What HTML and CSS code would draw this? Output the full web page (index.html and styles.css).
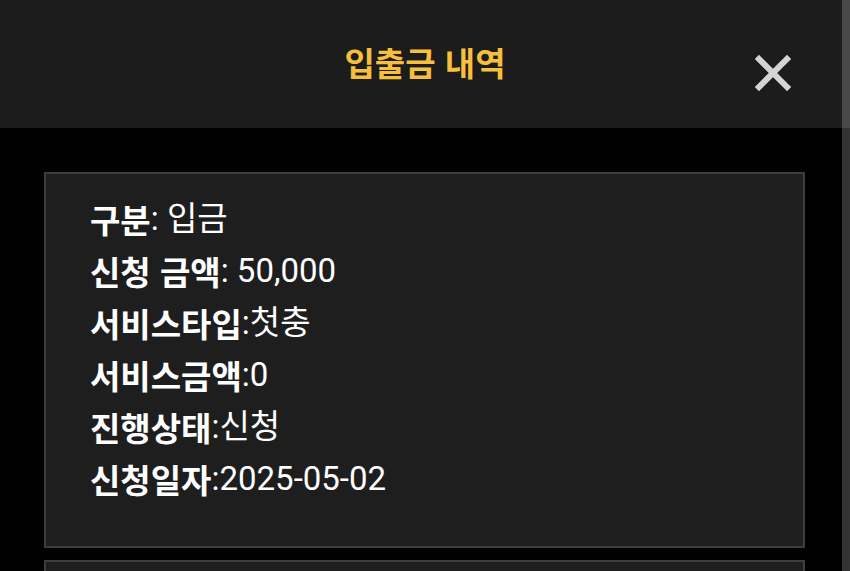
FILE: index.html
```html
<!DOCTYPE html>
<html lang="ko">
<head>
<meta charset="utf-8">
<title>입출금 내역</title>
<link rel="stylesheet" href="styles.css">
</head>
<body>
<div class="modal">
  <header class="modal-head">
    <h1 class="modal-title">입출금 내역</h1>
    <button class="close-btn" type="button" aria-label="닫기">
      <svg viewBox="0 0 36 36" width="36" height="36">
        <path d="M4 4 L32 32 M32 4 L4 32" stroke="#d4d4d4" stroke-width="6" stroke-linecap="square" fill="none"/>
      </svg>
    </button>
  </header>
  <main class="modal-body">
    <section class="record">
      <p class="row"><b>구분</b>: 입금</p>
      <p class="row"><b>신청 금액</b>: 50,000</p>
      <p class="row"><b>서비스타입</b>:첫충</p>
      <p class="row"><b>서비스금액</b>:0</p>
      <p class="row"><b>진행상태</b>:신청</p>
      <p class="row"><b>신청일자</b>:2025-05-02</p>
    </section>
    <section class="record">
      <p class="row"><b>구분</b>: 출금</p>
      <p class="row"><b>신청 금액</b>: 30,000</p>
    </section>
  </main>
</div>
<div class="scroll-track"></div>
</body>
</html>
```
FILE: styles.css
```css
* { box-sizing: border-box; }

html, body {
  margin: 0;
  height: 100%;
  background: #000;
  overflow: hidden;
  font-family: Roboto, "Noto Sans CJK KR", sans-serif;
}

.modal {
  width: 850px;
}

.modal-head {
  height: 128px;
  background: #1c1c1c;
  display: flex;
  align-items: center;
  justify-content: center;
  position: relative;
}

.modal-title {
  margin: 0 0 4px;
  color: #f6bf3c;
  font-family: "Noto Sans CJK KR", sans-serif;
  font-weight: 700;
  font-size: 33px;
  line-height: 40px;
}

.close-btn {
  position: absolute;
  right: 59px;
  top: 55px;
  width: 36px;
  height: 36px;
  padding: 0;
  border: 0;
  background: none;
}

.close-btn svg { display: block; }

.modal-body {
  padding: 44px 45px 0 44px;
  display: flex;
  flex-direction: column;
  gap: 12px;
}

.record {
  background: #1e1e1f;
  border: 2px solid #3e3e3f;
  padding: 19px 44px 41px 44px;
}

.row {
  margin: 0;
  height: 52px;
  display: flex;
  align-items: center;
  color: #fff;
  font-size: 33px;
  line-height: 40px;
  white-space: pre;
}

.row b {
  font-family: "Noto Sans CJK KR", sans-serif;
  font-weight: 700;
}

.scroll-track {
  position: fixed;
  top: 0;
  right: 0;
  width: 8px;
  height: 100%;
  background: rgba(255, 255, 255, 0.2);
}
```
